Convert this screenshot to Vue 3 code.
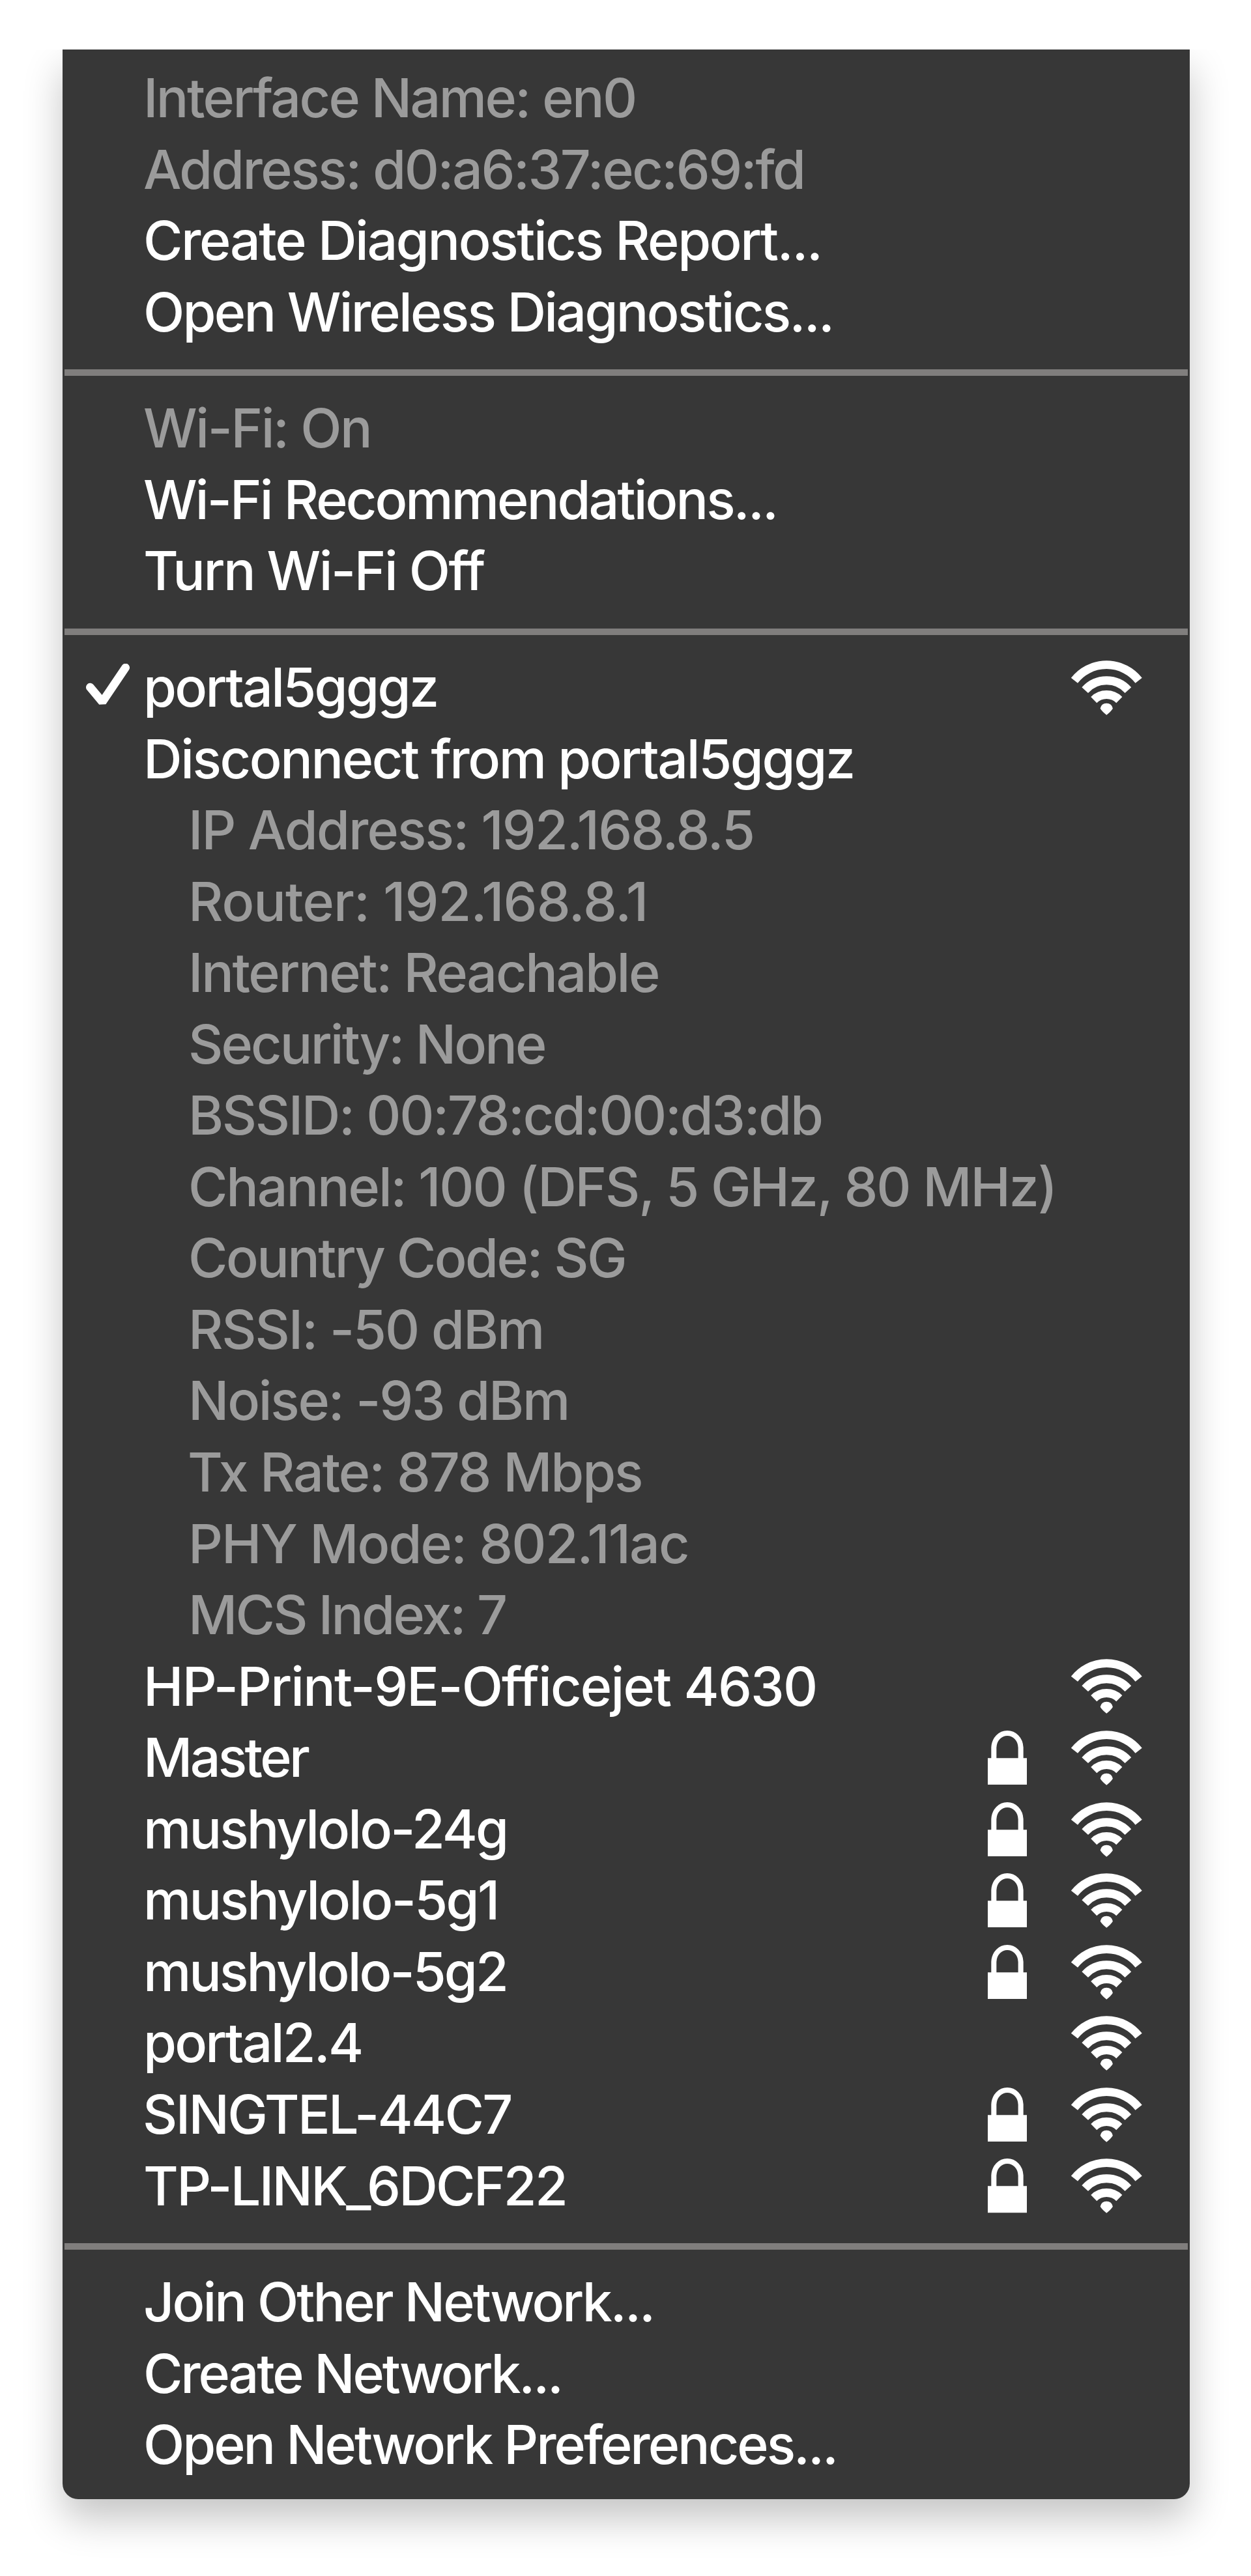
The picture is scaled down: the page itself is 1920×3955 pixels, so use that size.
<script setup>
// Every label carries the x of its first and last inked pixel (from the menu's left edge).
const L = 126
const S = 196

const sections = [
  [
    { text: 'Interface Name: en0', from: L + 4, to: 878, dim: true },
    { text: 'Address: d0:a6:37:ec:69:fd', from: L, to: 1136, dim: true },
    { text: 'Create Diagnostics Report...', from: L + 2, to: 1161 },
    { text: 'Open Wireless Diagnostics...', from: L + 2, to: 1179 },
  ],
  [
    { text: 'Wi-Fi: On', from: L, to: 470, dim: true },
    { text: 'Wi-Fi Recommendations...', from: L, to: 1093 },
    { text: 'Turn Wi-Fi Off', from: L + 1, to: 649 },
  ],
  [
    { text: 'portal5gggz', from: L + 3, to: 574, checked: true, wifi: true },
    { text: 'Disconnect from portal5gggz', from: L + 4, to: 1213 },
    { text: 'IP Address: 192.168.8.5', from: S + 3, to: 1059, dim: true },
    { text: 'Router: 192.168.8.1', from: S + 3, to: 893, dim: true },
    { text: 'Internet: Reachable', from: S + 3, to: 914, dim: true },
    { text: 'Security: None', from: S + 1, to: 740, dim: true },
    { text: 'BSSID: 00:78:cd:00:d3:db', from: S + 3, to: 1165, dim: true },
    { text: 'Channel: 100 (DFS, 5 GHz, 80 MHz)', from: S + 1, to: 1521, dim: true },
    { text: 'Country Code: SG', from: S + 1, to: 862, dim: true },
    { text: 'RSSI: -50 dBm', from: S + 3, to: 735, dim: true },
    { text: 'Noise: -93 dBm', from: S + 3, to: 774, dim: true },
    { text: 'Tx Rate: 878 Mbps', from: S - 1, to: 888, dim: true },
    { text: 'PHY Mode: 802.11ac', from: S + 3, to: 959, dim: true },
    { text: 'MCS Index: 7', from: S + 3, to: 680, dim: true },
    { text: 'HP-Print-9E-Officejet 4630', from: L + 4, to: 1155, wifi: true },
    { text: 'Master', from: L + 4, to: 379, lock: true, wifi: true },
    { text: 'mushylolo-24g', from: L + 3, to: 680, lock: true, wifi: true },
    { text: 'mushylolo-5g1', from: L + 3, to: 665, lock: true, wifi: true },
    { text: 'mushylolo-5g2', from: L + 3, to: 680, lock: true, wifi: true },
    { text: 'portal2.4', from: L + 3, to: 458, wifi: true },
    { text: 'SINGTEL-44C7', from: L + 1, to: 686, lock: true, wifi: true },
    { text: 'TP-LINK_6DCF22', from: L + 1, to: 771, lock: true, wifi: true },
  ],
  [
    { text: 'Join Other Network...', from: L + 1, to: 904 },
    { text: 'Create Network...', from: L + 2, to: 763 },
    { text: 'Open Network Preferences...', from: L + 2, to: 1185 },
  ],
]

// Tracks each label so that it spans its own width.
const ctx = document.createElement('canvas').getContext('2d')
function track(item) {
  ctx.font = `${item.dim ? 500 : 550} 82.5px Inter`
  const m = ctx.measureText(item.text)
  const ink = m.actualBoundingBoxRight + m.actualBoundingBoxLeft
  const spacing = (item.to - item.from - ink) / (item.text.length - 1)
  return {
    marginLeft: `${(item.from + m.actualBoundingBoxLeft).toFixed(1)}px`,
    letterSpacing: `${spacing.toFixed(3)}px`,
  }
}
</script>

<template>
  <main class="page">
    <div class="menu">
      <template v-for="(rows, s) in sections" :key="s">
        <hr v-if="s" class="separator" />
        <ul class="section">
          <li v-for="item in rows" :key="item.text" class="row" :class="{ dim: item.dim }">
            <svg v-if="item.checked" class="check" viewBox="0 0 200 200">
              <path d="M19 108 75 175 181 18" />
            </svg>
            <span class="label" :style="track(item)">{{ item.text }}</span>
            <span class="icons">
              <svg v-if="item.lock" class="lock" viewBox="0 0 181 250">
                <path class="shackle" d="M28 134V78C30 38 58 12 90 12S150 38 152 78V134" />
                <path class="body" d="M0 127H181V250H0Z" />
              </svg>
              <svg v-if="item.wifi" class="wifi" viewBox="0 0 334 252">
                <path d="M18 92A189 189 0 0 1 316 92" />
                <path d="M67 137A134 134 0 0 1 267 137" />
                <path d="M108 182A84 84 0 0 1 226 182" />
                <path class="dot" d="M138 222Q143 198 167 198T196 222Q188 236 167 252Q146 236 138 222Z" />
              </svg>
            </span>
          </li>
        </ul>
      </template>
    </div>
  </main>
</template>

<style>
body {
  background: #fff;
}
</style>

<style scoped>
.page {
  width: 1920px;
  height: 3955px;
  box-sizing: border-box;
  padding: 76px 94.5px 0 96px;
  overflow: hidden;
  background: #fff;
}
.menu {
  height: 3760.5px;
  box-sizing: border-box;
  padding-top: 20.2px;
  background: #373737;
  border-radius: 0 0 24px 24px;
  box-shadow: 0 30px 60px rgba(0, 0, 0, 0.23);
  clip-path: inset(0 -96px -120px -96px);
  font-family: Inter, "Liberation Sans", sans-serif;
  font-size: 82.5px;
}
.section {
  list-style: none;
  margin: 0;
  padding: 0;
}
.row {
  position: relative;
  display: flex;
  align-items: center;
  height: 109.55px;
  line-height: 109.55px;
  padding-right: 71.5px;
  color: #fff;
  font-weight: 550;
  white-space: pre;
}
.dim {
  color: #9b9b9b;
  font-weight: 500;
}
.separator {
  height: 10px;
  margin: 33px 3px 26px;
  border: 0;
  background: #807e7d;
}
.icons {
  display: flex;
  gap: 67px;
  margin-left: auto;
}
.check {
  position: absolute;
  left: 35.5px;
  top: 18px;
  width: 67px;
  height: 67px;
  fill: none;
  stroke: #fff;
  stroke-width: 38;
  stroke-linejoin: bevel;
  stroke-linecap: round;
}
.lock {
  width: 60.3px;
  height: 83.3px;
}
.shackle {
  fill: none;
  stroke: #fff;
  stroke-width: 24;
}
.body,
.wifi .dot {
  fill: #fff;
  stroke: none;
}
.wifi {
  width: 110.6px;
  height: 84px;
  fill: none;
  stroke: #fff;
  stroke-width: 39;
}
</style>
